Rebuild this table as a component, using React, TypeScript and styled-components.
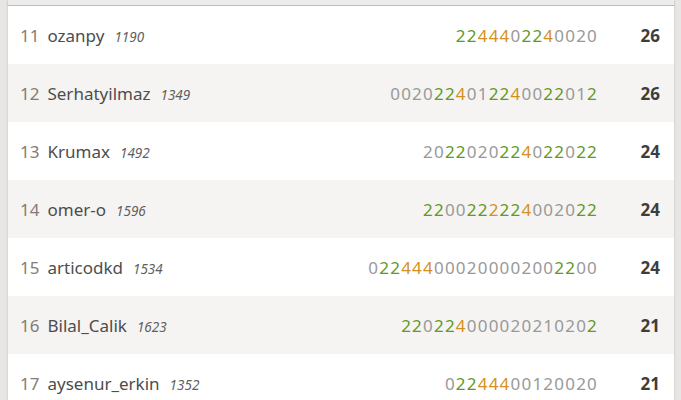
import React from "react";
import styled, { createGlobalStyle } from "styled-components";

const GlobalStyle = createGlobalStyle`
  html, body {
    margin: 0;
    padding: 0;
    background: #e8e6e4;
    font-family: "Noto Sans", "Liberation Sans", sans-serif;
  }
  body {
    padding: 0 7px 0 8px;
    overflow: hidden;
  }
`;

const Box = styled.div`
  background: #fff;
  box-shadow: 0 0 0 1px #dcdad8, 0 2px 3px rgba(0, 0, 0, 0.12);
`;

const HeadBar = styled.div`
  height: 5px;
  background: #eeeceb;
  border-bottom: 1px solid #bdbbb9;
  box-shadow: 0 1px 2px rgba(0, 0, 0, 0.15);
`;

const Table = styled.div`
  display: flex;
  flex-direction: column;
`;

const Row = styled.div<{ $zebra: boolean }>`
  display: grid;
  grid-template-columns: 1fr auto 62px;
  align-items: center;
  height: 58px;
  padding: 0 14px 0 12px;
  background: ${(p) => (p.$zebra ? "#f5f4f2" : "#ffffff")};
`;

const Player = styled.div`
  display: flex;
  align-items: baseline;
  white-space: nowrap;
`;

const Rank = styled.span`
  font-size: 17px;
  color: #857b72;
  margin-right: 8px;
`;

const Name = styled.span`
  font-size: 17px;
  color: #4d4d4d;
  margin-right: 10px;
`;

const Rating = styled.em`
  font-size: 13.5px;
  color: #5f5f5f;
  font-style: italic;
`;

const Sheet = styled.div`
  font-size: 17px;
  letter-spacing: 1.2px;
  color: #9b9b9b;
  text-align: right;
  white-space: nowrap;
`;

const Digit = styled.span<{ $kind: "n" | "s" | "d" }>`
  color: ${(p) =>
    p.$kind === "s" ? "#629924" : p.$kind === "d" ? "#d59120" : "#999999"};
`;

const Score = styled.div`
  font-size: 17px;
  font-weight: 700;
  color: #3d3d3d;
  text-align: right;
`;

type Entry = {
  rank: number;
  name: string;
  rating: number;
  sheet: string;
  kinds: string;
  score: number;
};

const rows: Entry[] = [
  { rank: 11, name: "ozanpy", rating: 1190, sheet: "2244402240020", kinds: "ssdddnssdnnnn", score: 26 },
  { rank: 12, name: "Serhatyilmaz", rating: 1349, sheet: "0020224012240022012", kinds: "nnnnssdnnssdnnssnns", score: 26 },
  { rank: 13, name: "Krumax", rating: 1492, sheet: "2022020224022022", kinds: "nnssnnnssdnssnss", score: 24 },
  { rank: 14, name: "omer-o", rating: 1596, sheet: "2200222224002022", kinds: "ssnnssdssdnnnnss", score: 24 },
  { rank: 15, name: "articodkd", rating: 1534, sheet: "022444000200002002200", kinds: "nssdddnnnnnnnnnnnssnn", score: 24 },
  { rank: 16, name: "Bilal_Calik", rating: 1623, sheet: "220224000020210202", kinds: "ssnssdnnnnnnnnnnns", score: 21 },
  { rank: 17, name: "aysenur_erkin", rating: 1352, sheet: "02244400120020", kinds: "nssdddnnnnnnnn", score: 21 },
];

export default function App() {
  return (
    <>
      <GlobalStyle />
      <Box>
        <HeadBar />
        <Table>
          {rows.map((r, i) => (
            <Row key={r.rank} $zebra={i % 2 === 1}>
              <Player>
                <Rank>{r.rank}</Rank>
                <Name>{r.name}</Name>
                <Rating>{r.rating}</Rating>
              </Player>
              <Sheet>
                {r.sheet.split("").map((d, j) => (
                  <Digit key={j} $kind={r.kinds[j] as "n" | "s" | "d"}>
                    {d}
                  </Digit>
                ))}
              </Sheet>
              <Score>{r.score}</Score>
            </Row>
          ))}
        </Table>
      </Box>
    </>
  );
}
